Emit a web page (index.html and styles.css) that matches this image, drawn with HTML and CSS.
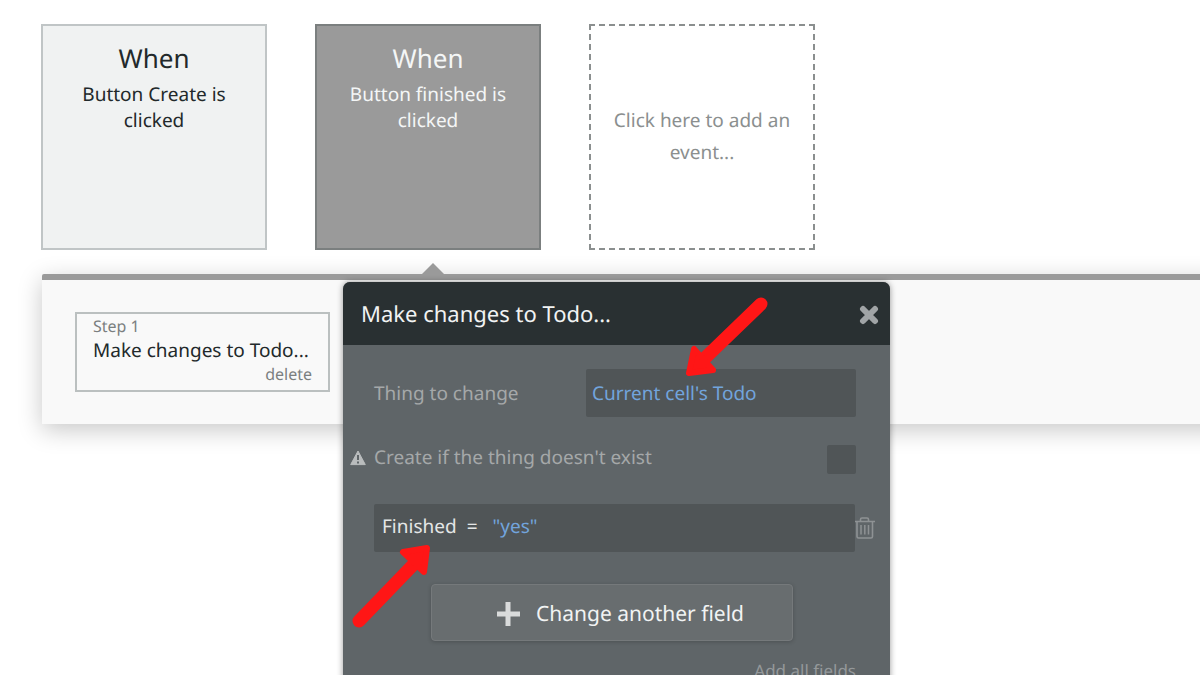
FILE: index.html
```
<!DOCTYPE html>
<html lang="en">
<head>
  <meta charset="UTF-8" />
  <meta name="viewport" content="width=device-width, initial-scale=1.0" />
  <title>Workflow</title>
  <link rel="stylesheet" href="styles.css">
</head>
<body>
  <main class="workflow">
    <div class="events">
      <button class="event" type="button">
        <span class="event-title">When</span>
        <span class="event-text">Button Create is clicked</span>
      </button>
      <button class="event selected" type="button">
        <span class="event-title">When</span>
        <span class="event-text">Button finished is clicked</span>
      </button>
      <button class="event add-event" type="button">Click here to add an event...</button>
    </div>

    <section class="steps">
      <div class="step">
        <span class="step-number">Step 1</span>
        <span class="step-name">Make changes to Todo...</span>
        <a class="step-delete" href="#">delete</a>
      </div>

      <form class="editor">
        <header class="editor-header">
          <h2 class="editor-title">Make changes to Todo...</h2>
          <button class="icon-button" type="button" aria-label="Close">
            <svg width="20" height="22" viewBox="0 0 20 22"><path d="M4 6L16 18M16 6L4 18" fill="none" stroke="#a0a4a6" stroke-width="6" stroke-linecap="round" /></svg>
          </button>
        </header>

        <div class="editor-body">
          <div class="row">
            <label class="row-label" for="thing">Thing to change</label>
            <input class="field thing" id="thing" type="text" value="Current cell's Todo">
          </div>

          <div class="row check-row">
            <svg class="warning" width="16" height="18" viewBox="0 0 16 18">
              <path d="M8 1L15.3 14.6H.7Z" fill="#b9bcbd" stroke="#b9bcbd" stroke-linejoin="round" />
              <path d="M8 5v5M8 11.5v2" stroke="#5f6568" stroke-width="2" />
            </svg>
            <label class="row-label" for="create">Create if the thing doesn't exist</label>
            <input class="check" id="create" type="checkbox">
          </div>

          <div class="row change-row">
            <div class="field change">
              <label for="finished">Finished</label>
              <span>=</span>
              <input class="change-value" id="finished" type="text" value='"yes"'>
            </div>
            <button class="icon-button" type="button" aria-label="Delete field">
              <svg width="20" height="24" viewBox="0 0 20 24" fill="none" stroke="#8e9294">
                <path d="M0 5.5H20M5.5 5V3.5Q5.5 2 7 2H12Q13.500 2 13.500 3.500V5" stroke-width="1.600" />
                <path d="M2 6V20.500Q2 22 3.500 22H16Q17.500 22 17.500 20.500V6" stroke-width="1.600" />
                <path d="M6 9V18.500M9.800 9V18.500M13.500 9V18.500" stroke-width="1.500" />
              </svg>
            </button>
          </div>

          <button class="add-field" type="button">
            <svg width="24" height="24" viewBox="0 0 24 24"><path d="M12 0V24M1 12H24" stroke="#d9dbdb" stroke-width="5" /></svg>
            Change another field
          </button>

          <a class="add-all" href="#">Add all fields</a>
        </div>

        <svg class="pointer pointer-thing" width="84" height="84" viewBox="684 296 84 84">
          <path d="M761 304L704 359" stroke="#ff1616" stroke-width="13" stroke-linecap="round" />
          <path d="M694 349L689 373L713 370Z" fill="#ff1616" stroke="#ff1616" stroke-width="6" stroke-linejoin="round" />
        </svg>
        <svg class="pointer pointer-change" width="84" height="88" viewBox="350 542 84 88">
          <path d="M359 621L413 565" stroke="#ff1616" stroke-width="13" stroke-linecap="round" />
          <path d="M403 552L427 548L424 572Z" fill="#ff1616" stroke="#ff1616" stroke-width="6" stroke-linejoin="round" />
        </svg>
      </form>
    </section>
  </main>
</body>
</html>
```

FILE: styles.css
```
* {
  box-sizing: border-box;
}

body {
  margin: 0;
  background: #fff;
  color: #22292b;
  font-family: "Noto Sans", "Open Sans", sans-serif;
  font-size: 19px;
  text-rendering: geometricPrecision;
}

button,
input {
  font: inherit;
  color: inherit;
  text-rendering: inherit;
}

.workflow {
  height: 100vh;
  padding: 24px 0 0 41px;
  overflow: hidden;
}

.events {
  display: flex;
  gap: 48px;
}

.event {
  display: flex;
  flex-direction: column;
  align-items: center;
  width: 226px;
  height: 226px;
  padding: 14px 24px;
  background: #f0f2f2;
  border: 2px solid #c0c5c6;
  line-height: 26px;
  cursor: pointer;
}

.event-title {
  margin-bottom: 5px;
  font-size: 26px;
  line-height: 36px;
}

.event.selected {
  background: #9a9a9a;
  border-color: #7b7f7f;
  color: #f4f6f6;
}

.event.add-event {
  justify-content: center;
  padding: 0 16px 2px;
  background: #fff;
  border: 2px dashed #8b8f8f;
  color: #8b8f8f;
  line-height: 32px;
}

.steps {
  position: relative;
  height: 150px;
  margin: 24px -32px 0 1px;
  padding: 32px 33px;
  background: #f9f9f9;
  border-top: 6px solid #9a9a9a;
  border-top-left-radius: 2px;
  box-shadow: 0 6px 24px rgba(0, 0, 0, 0.22);
}

/* notch under the selected event */
.steps::before {
  content: "";
  position: absolute;
  top: -17px;
  left: 380px;
  border: 11px solid transparent;
  border-top: 0;
  border-bottom-color: #9a9a9a;
}

.step {
  display: flex;
  flex-direction: column;
  width: 255px;
  height: 80px;
  padding: 0 16px;
  border: 2px solid #bbc0c0;
}

.step-number,
.step-delete {
  color: #7b7f80;
  font-size: 16px;
  line-height: 24px;
}

.step-name {
  line-height: 24px;
  white-space: nowrap;
}

.step-delete {
  align-self: flex-end;
  text-decoration: none;
}

.editor {
  position: absolute;
  top: 2px;
  left: 301px;
  width: 547px;
  border-radius: 7px 7px 0 0;
  background: #5f6568;
  box-shadow: 0 0 6px rgba(0, 0, 0, 0.4);
}

.editor-header {
  display: flex;
  align-items: center;
  justify-content: space-between;
  height: 63px;
  padding: 0 11px 0 18px;
  border-radius: 7px 7px 0 0;
  background: #293032;
  color: #f1f3f3;
}

.editor-title {
  margin: 0;
  font-size: 22px;
  font-weight: 400;
}

.icon-button {
  display: flex;
  padding: 0;
  background: none;
  border: 0;
  cursor: pointer;
}

.editor-body {
  display: flex;
  flex-direction: column;
  padding: 24px 34px 24px 31px;
  color: #a5a8a9;
}

.row {
  display: flex;
  align-items: center;
  justify-content: space-between;
}

.field {
  height: 48px;
  border: 0;
  border-radius: 2px;
  background: #505557;
}

.thing {
  width: 270px;
  padding: 0 6px;
  color: #72a4dc;
}

.check-row {
  gap: 8px;
  margin: 27px 0 30px -24px;
}

.check-row .row-label {
  padding-bottom: 4px;
}

.check {
  appearance: none;
  width: 29px;
  height: 29px;
  margin: 0 0 0 auto;
  border-radius: 2px;
  background: #505557;
}

.change-row {
  margin-right: -19px;
}

.change {
  display: flex;
  flex: 1;
  align-items: center;
  gap: 10px;
  padding: 0 8px 4px;
  color: #e4e6e6;
}

.change-value {
  flex: 1;
  min-width: 0;
  padding: 0 5px;
  background: none;
  border: 0;
  color: #72a4dc;
}

.add-field {
  display: flex;
  align-items: center;
  align-self: center;
  justify-content: center;
  gap: 16px;
  width: 362px;
  height: 57px;
  margin: 32px 6px 18px 0;
  padding: 2px 0 0 16px;
  background: #686d6f;
  border: 1px solid #75797b;
  border-radius: 4px;
  box-shadow: 0 1px 4px rgba(0, 0, 0, 0.2);
  color: #f1f3f3;
  font-size: 21px;
  cursor: pointer;
}

.add-all {
  align-self: flex-end;
  color: #94989a;
  font-size: 17px;
  text-decoration: none;
}

/* red pointers drawn over the editor */
.pointer {
  position: absolute;
  pointer-events: none;
}

.pointer-thing {
  top: 14px;
  left: 341px;
}

.pointer-change {
  top: 260px;
  left: 7px;
}
```
